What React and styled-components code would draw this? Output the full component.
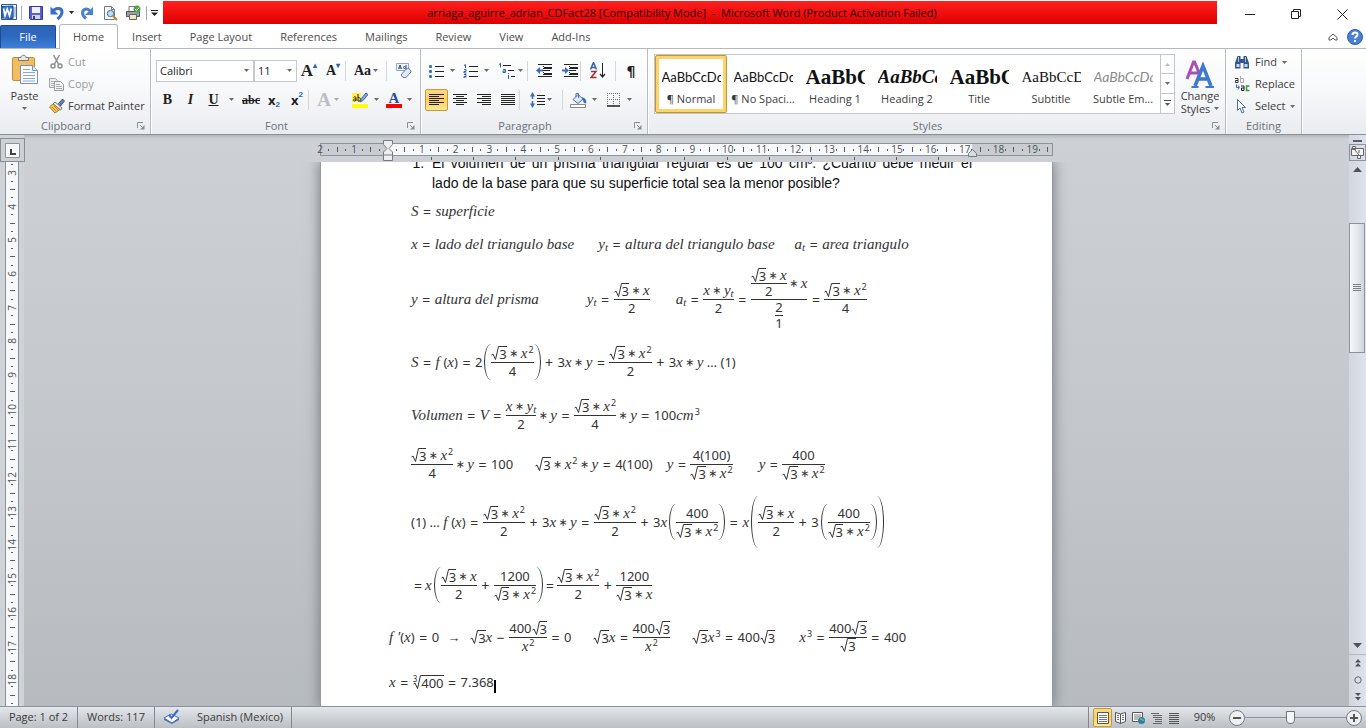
import React from "react";
import styled, { createGlobalStyle, css } from "styled-components";

const Global = createGlobalStyle`
  *, *::before, *::after { box-sizing: border-box; }
  html, body, #root { height: 100%; }
  body { margin: 0; overflow: hidden; font: 11px/16px "Open Sans", "Noto Sans", sans-serif; color: #3b3b3b; background: #fff; }
  button, select, input { font: inherit; color: inherit; }
  button { border: 0; padding: 0; background: none; }
  svg { display: block; flex: none; }
`;

/* ---------- window frame ---------- */
const Window = styled.div`
  display: grid;
  grid-template-rows: 25px 24px 86px minmax(0, 1fr) 22px;
  height: 100vh;
`;
const TitleBar = styled.header`
  display: flex;
  align-items: stretch;
`;
const QuickAccess = styled.div`
  display: flex;
  align-items: center;
  width: 163px;
  padding-left: 1px;
  gap: 3px;
  flex: none;
`;
const IconButton = styled.button`
  display: flex;
  align-items: center;
  justify-content: center;
  gap: ${(p) => p.$gap || 0}px;
  width: ${(p) => p.$w || 22}px;
  height: ${(p) => p.$h || 22}px;
  flex: none;
`;
const Separator = styled.span`
  width: 1px;
  height: ${(p) => p.$h || 14}px;
  background: ${(p) => p.$c || "#a9adb3"};
  flex: none;
`;
const Title = styled.h1`
  flex: 1;
  min-width: 0;
  margin: 1px 10px 1px 0;
  padding-right: 16px;
  font: 11px/24px "Open Sans", sans-serif;
  text-align: center;
  white-space: pre;
  overflow: hidden;
  color: #2a0000;
  background: linear-gradient(#ff2020, #f01010 50%, #d90000);
`;
const WindowButtons = styled.div`
  display: flex;
  width: 139px;
  flex: none;
`;
const WindowButton = styled.button`
  flex: 1;
  display: grid;
  place-items: center;
  padding-top: 3px;
`;

/* ---------- tabs ---------- */
const TabBar = styled.nav`
  display: flex;
  align-items: flex-end;
  border-bottom: 1px solid #b4b9bf;
`;
const FileTab = styled.button`
  width: 56px;
  height: 23px;
  margin-right: 3px;
  color: #fff;
  border: 1px solid #1c4b98;
  border-bottom: 0;
  border-radius: 2px 2px 0 0;
  background: linear-gradient(#2b62b4, #2f69c0 50%, #3f80da);
`;
const Tab = styled.button`
  height: 24px;
  padding: 0 13px;
  border: 1px solid transparent;
  border-bottom: 0;
  color: #4c4c4c;
  ${(p) =>
    p.$active &&
    css`
      margin-bottom: -1px;
      height: 25px;
      border-color: #b4b9bf;
      border-radius: 3px 3px 0 0;
      background: #fff;
    `}
`;
const TabTools = styled.div`
  display: flex;
  align-items: center;
  gap: 4px;
  height: 23px;
  margin-left: auto;
  padding-right: 3px;
`;

/* ---------- ribbon ---------- */
const Ribbon = styled.section`
  display: flex;
  background: linear-gradient(#fff, #f7f8fa 50%, #e9ecf0);
  border-bottom: 1px solid #8b9097;
`;
const Group = styled.section`
  display: flex;
  flex-direction: column;
  width: ${(p) => p.$w}px;
  flex: none;
  border-right: 1px solid #b9bdc3;
  box-shadow: 1px 0 0 #fff;
`;
const GroupBody = styled.div`
  display: flex;
  flex: 1;
  min-height: 0;
  padding: ${(p) => p.$p || "0"};
`;
const GroupLabel = styled.div`
  display: grid;
  grid-template-columns: ${(p) => (p.$plain ? "1fr" : "1fr 18px")};
  align-items: center;
  height: 16px;
  text-align: center;
  color: #6c7078;
`;
const LaunchButton = styled.button`
  display: grid;
  place-items: center;
  height: 16px;
`;
const Stack = styled.div`
  display: flex;
  flex-direction: column;
  padding-top: ${(p) => p.$pt || 0}px;
`;
const BigButton = styled.button`
  display: flex;
  flex-direction: column;
  align-items: center;
  gap: ${(p) => p.$gap || 0}px;
  width: ${(p) => p.$w}px;
  padding-top: 5px;
  line-height: 13px;
  flex: none;
`;
const TextButton = styled.button`
  display: flex;
  align-items: center;
  gap: ${(p) => p.$gap || 3}px;
  height: 22px;
  white-space: nowrap;
  color: ${(p) => (p.$off ? "#9b9b9b" : "#3b3b3b")};
`;
const ToolRow = styled.div`
  display: flex;
  align-items: center;
  height: 29px;
`;
const Combo = styled.label`
  display: flex;
  align-items: center;
  width: ${(p) => p.$w}px;
  height: 22px;
  padding-right: 4px;
  border: 1px solid #c4c8ce;
  background: #fff;
`;
const ComboSelect = styled.select`
  appearance: none;
  flex: 1;
  min-width: 0;
  border: 0;
  padding: 0 3px;
  background: none;
  color: #1e1e1e;
`;
const Letter = styled.span`
  font: ${(p) => p.$font || 'bold 14px/18px "Liberation Serif", serif'};
  color: ${(p) => p.$c || "#1e1e1e"};
  text-decoration: ${(p) => p.$deco || "none"};
`;
const Tiny = styled.sup`
  font: bold 8px/8px "Liberation Sans", sans-serif;
  color: #2f5fb3;
  align-self: ${(p) => (p.$low ? "flex-end" : "flex-start")};
  margin: 2px 0;
`;
const Underbar = styled.span`
  display: flex;
  flex-direction: column;
  align-items: center;
  width: 16px;
  border-bottom: 4px solid ${(p) => p.$c};
`;
const ToggleButton = styled(IconButton)`
  border: 1px solid #c29b3c;
  border-radius: 2px;
  background: linear-gradient(#fcd985, #fbcf5e 50%, #fdea8c);
`;
const CaretLine = styled.span`
  display: flex;
  align-items: center;
  gap: 4px;
`;

/* ---------- style gallery ---------- */
const Gallery = styled.div`
  display: flex;
  flex: none;
  width: 521px;
  height: 60px;
  border: 1px solid #c3c7cc;
  background: #fff;
`;
const StyleCard = styled.button`
  display: flex;
  flex-direction: column;
  align-items: center;
  width: 72px;
  flex: none;
  padding-top: 12px;
  ${(p) =>
    p.$active &&
    css`
      padding-top: 11px;
      border: 1px solid #c29436;
      border-radius: 2px;
      box-shadow: inset 0 0 0 3px #fbd56c;
    `}
`;
const Preview = styled.span`
  width: 59px;
  height: 24px;
  overflow: hidden;
  text-align: left;
  white-space: nowrap;
  font: ${(p) => p.$font};
  line-height: 20px;
  color: ${(p) => p.$c || "#111"};
`;
const GalleryScroll = styled.div`
  display: grid;
  grid-template-rows: repeat(3, 1fr);
  width: 14px;
  margin-left: auto;
`;
const GalleryButton = styled.button`
  display: grid;
  place-items: center;
  border-left: 1px solid #c3c7cc;
  border-bottom: 1px solid #c3c7cc;
  &:last-child { border-bottom: 0; }
`;

/* ---------- workspace ---------- */
const Workspace = styled.main`
  display: grid;
  grid-template-columns: 24px minmax(0, 1fr) 17px;
  min-height: 0;
  background: linear-gradient(#b4b8bd 0, #cdd0d5 4px, #c4c7cb 50%, #b7bbbf);
`;
const LeftRail = styled.div`
  display: flex;
  flex-direction: column;
  min-height: 0;
  padding-top: 3px;
  background: #cfd2d7;
`;
const TabStop = styled.button`
  display: grid;
  place-items: center;
  width: 25px;
  height: 24px;
  flex: none;
  border: 1px solid #8a8f97;
  background: #cdd0d5;
  z-index: 1;
`;
const VRuler = styled.ol`
  display: grid;
  grid-template-rows: repeat(65, minmax(0, 1fr));
  flex: 1;
  min-height: 0;
  width: 14px;
  margin: -3px 0 -3px 5px;
  padding: 0;
  list-style: none;
  border: 1px solid #8a93a0;
  background: #f7f8f9;
`;
const Mark = styled.li`
  display: grid;
  place-items: center;
  min-width: 0;
  min-height: 0;
  font: 10px/9px "Open Sans", sans-serif;
  color: #4f5358;
`;
const VNumber = styled.span`
  writing-mode: vertical-rl;
  transform: rotate(180deg);
  line-height: 12px;
`;
const Dash = styled.i`
  width: ${(p) => p.$w}px;
  height: ${(p) => p.$h}px;
  background: #5a5e63;
`;
const Center = styled.div`
  display: flex;
  flex-direction: column;
  align-items: center;
  min-width: 0;
  min-height: 0;
`;
const RulerArea = styled.div`
  width: 733px;
  height: 27px;
  flex: none;
  padding-top: 8px;
`;
const HRuler = styled.div`
  position: relative;
  height: 13px;
  border: 1px solid #8a93a0;
  background: linear-gradient(90deg, #c9ccd1 0 67px, #f7f8f9 67px 651px, #c9ccd1 651px);
`;
const HMarks = styled.ol`
  display: grid;
  grid-template-columns: repeat(87, minmax(0, 1fr));
  align-items: center;
  height: 11px;
  margin: 0 0 0 -5px;
  padding: 0;
  list-style: none;
`;
const Handle = styled.span`
  position: absolute;
  top: ${(p) => p.$top}px;
  left: ${(p) => p.$left}px;
`;
const TabTicks = styled.div`
  display: grid;
  grid-template-columns: repeat(13, 1fr);
  width: 550px;
  height: 5px;
  margin-left: 90px;
  padding-top: 1px;
  justify-items: center;
`;
const PageView = styled.div`
  display: flex;
  justify-content: center;
  align-self: stretch;
  flex: 1;
  min-height: 0;
  overflow: hidden;
`;
const Paper = styled.article`
  width: 733px;
  flex: none;
  overflow: hidden;
  background: #fff;
  border: solid #9599a0;
  border-width: 0 1px;
  box-shadow: 0 0 12px 1px #7d8085;
  color: #111;
`;
const Question = styled.ol`
  margin: -9px 0 1px;
  padding: 0 80px 0 107px;
  font: 14px/20px "Liberation Sans", Arial, sans-serif;
  li { padding-left: 4px; }
`;
const Justified = styled.span`
  display: block;
  text-align-last: justify;
`;

/* ---------- equations ---------- */
const Equation = styled.div`
  display: flex;
  align-items: center;
  height: ${(p) => p.$h}px;
  margin-left: ${(p) => (p.$outer ? 68 : 90)}px;
  font: 13px/17px "Noto Sans", sans-serif;
  color: #333;
  white-space: pre;
`;
const V = styled.i`
  font: italic 15px/17px "Liberation Serif", serif;
`;
const O = styled.span`
  width: ${(p) => p.$w || 17}px;
  text-align: center;
  font-size: 14px;
`;
const Star = styled.span`
  width: 14px;
  text-align: center;
  font: 11px/17px "DejaVu Sans", sans-serif;
`;
const Sup = styled.sup`
  font: 9px/9px "Noto Sans", sans-serif;
  margin: 0 0 8px 1px;
`;
const Sub = styled.sub`
  font: italic 11px/9px "Liberation Serif", serif;
  margin: 7px 0 0;
`;
const Gap = styled.span`
  width: ${(p) => p.$w}px;
`;
const FracBox = styled.span`
  display: inline-grid;
  grid-template-rows: 1fr 1px 1fr;
  justify-items: center;
`;
const Bar = styled.span`
  justify-self: stretch;
  height: 1px;
  background: #333;
`;
const Term = styled.span`
  display: flex;
  align-items: center;
  align-self: ${(p) => (p.$end ? "end" : "start")};
`;
const NestedBox = styled(FracBox)`
  line-height: 15px;
  & ${V}, & ${Star} { line-height: 15px; }
`;
const Root = styled.span`
  display: flex;
  align-items: stretch;
  height: 14px;
  line-height: 14px;
`;
const Radicand = styled.span`
  border-top: 1px solid #333;
`;
const Index = styled.sup`
  font: 8px/8px "Noto Sans", sans-serif;
  margin: 0 -4px 6px 0;
`;
const Paren = styled.span`
  width: 7px;
  height: ${(p) => p.$h || 36}px;
  border: 0 solid #333;
  ${(p) =>
    p.$right
      ? "border-right-width: 1px; border-radius: 0 100% 100% 0 / 0 50% 50% 0;"
      : "border-left-width: 1px; border-radius: 100% 0 0 100% / 50% 0 0 50%;"}
`;
const Caret = styled.span`
  width: 2px;
  height: 13px;
  margin-top: 8px;
  background: #000;
`;

/* ---------- vertical scroll bar ---------- */
const ScrollRail = styled.aside`
  display: flex;
  flex-direction: column;
  align-items: stretch;
  min-height: 0;
  padding-top: 3px;
  background: linear-gradient(90deg, #d3d8df, #dde2ec);
`;
const RailButton = styled.button`
  display: grid;
  place-items: center;
  height: ${(p) => p.$h}px;
  flex: none;
  border: ${(p) => (p.$box ? "1px solid #8a93a0" : "0")};
  ${(p) => p.$line && "border-top: 1px solid #b3b8c0;"}
`;
const Track = styled.div`
  flex: 1;
  min-height: 0;
  display: grid;
  grid-template-rows: 45fr 129fr 282fr;
`;
const Thumb = styled.div`
  grid-row: 2;
  display: grid;
  place-items: center;
  margin-right: 1px;
  border: 1px solid #8a93a0;
  background: linear-gradient(90deg, #f5f7fa, #e6e9ee 50%, #d0d5dd);
`;

/* ---------- status bar ---------- */
const StatusBar = styled.footer`
  display: flex;
  align-items: center;
  border-top: 1px solid #8a93a0;
  background: linear-gradient(#e3e6ea, #cfd3d7 50%, #bcc0c5);
`;
const StatusItem = styled.button`
  display: flex;
  align-items: center;
  justify-content: center;
  gap: 16px;
  height: 21px;
  padding-bottom: 1px;
  width: ${(p) => p.$w}px;
  border-right: 1px solid #85898f;
`;
const ViewTools = styled.div`
  display: flex;
  align-items: center;
  height: 21px;
  margin-left: auto;
  padding-left: 4px;
  border-left: 1px solid #85898f;
`;
const ZoomLabel = styled.button`
  width: 45px;
  height: 21px;
  padding: 0 4px 1px 0;
`;
const Slider = styled.input`
  appearance: none;
  width: 101px;
  height: 18px;
  margin: 0;
  background: linear-gradient(#8a93a0, #8a93a0) center / 100% 1px no-repeat;
  &::-webkit-slider-thumb {
    appearance: none;
    width: 9px;
    height: 13px;
    background: #f4f6f8;
    border: 1px solid #6d7480;
    border-radius: 1px 1px 5px 5px;
  }
`;

/* ---------- icons ---------- */
const Svg = ({ w = 16, h = 16, children }) => (
  <svg width={w} height={h} viewBox={`0 0 ${w} ${h}`} fill="none" aria-hidden="true">
    {children}
  </svg>
);
const Down = ({ c = "#6a6a6a" }) => (
  <Svg w={5} h={3}><path d="M0 0h5L2.500 3z" fill={c} /></Svg>
);
const Launcher = () => (
  <Svg w={8} h={8}>
    <path d="M.5 6V.5H6M3 3l3 3" stroke="#8a8e94" />
    <path d="M7.500 3v4.500H3z" fill="#8a8e94" />
  </Svg>
);
const Lines = ({ rows, w = 16, c = "#222" }) => (
  <Svg w={w} h={12}>
    {rows.map(([x, y, len], i) => <rect key={i} x={x} y={y} width={len} height="1" fill={c} />)}
  </Svg>
);
const WordLogo = () => (
  <Svg w={17} h={17}>
    <path d="M.5.5h15v15H.5z" fill="#fff" stroke="#2a5caa" />
    <path d="M12 4h3M12 6h3M12 8h3M12 10h3M12 12h3" stroke="#6f95cf" />
    <path d="M1 2.500 12 2v12.500L1 14z" fill="#3b78cc" stroke="#1b4687" />
    <path d="M2.500 4.500 4 11.500 6.200 5l2.300 6.500 1.800-7" stroke="#fff" strokeWidth="1.700" />
  </Svg>
);
const SaveIcon = () => (
  <Svg>
    <path d="M1.500 1.500h13v13h-12l-1-1z" fill="#5a60c4" stroke="#343a94" />
    <path d="M4 2h8v6H4z" fill="#eef1fb" /><path d="M4 10h8v4H4z" fill="#cdd3ea" /><path d="M5 11h2v3H5z" fill="#343a94" />
  </Svg>
);
const UndoIcon = () => (
  <Svg>
    <path d="M4 6.500C6 2.500 13 2.500 13 7c0 3-2 5-4.500 7" stroke="#3a6fc4" strokeWidth="3" />
    <path d="M1.500 1.500v8h8z" fill="#3a6fc4" />
  </Svg>
);
const RedoIcon = () => (
  <Svg>
    <path d="M11 6C8.500 2.500 3.500 4 3.500 8c0 2.500 1.500 4 3.500 5.500" stroke="#4a80d2" strokeWidth="3" />
    <path d="M14 2v8H6z" fill="#4a80d2" />
  </Svg>
);
const PreviewIcon = () => (
  <Svg>
    <path d="M2.500 1.500h7l3 3v10h-10z" fill="#fff" stroke="#6f7a8a" />
    <path d="M9.500 1.500v3h3" stroke="#6f7a8a" />
    <circle cx="8.500" cy="8.500" r="3.200" fill="#bcdcf5" stroke="#4f6a8c" />
    <path d="m11 11 4 4" stroke="#c58332" strokeWidth="2.200" />
  </Svg>
);
const PrintIcon = () => (
  <Svg>
    <path d="M4 1.500h6v5H4z" fill="#fff" stroke="#777" />
    <path d="M1.500 6.500h13v5h-13z" fill="#9aa0a8" stroke="#555" />
    <path d="M4.500 9.500h7v5h-7z" fill="#f4e6b6" stroke="#666" />
    <circle cx="12" cy="4" r="3.500" fill="#4da04a" /><path d="m10.200 4 1.500 1.500L14 2.500" stroke="#fff" />
  </Svg>
);
const PasteIcon = () => (
  <Svg w={28} h={30}>
    <rect x="1.500" y="3.500" width="22" height="23" rx="1.500" fill="#f0bd62" stroke="#c58e35" />
    <path d="M7.500 6.500v-3H10c0-3 5-3 5 0h2.500v3z" fill="#e4e6e9" stroke="#74787e" />
    <path d="M9.500 11.500h12l5 5v13h-17z" fill="#fbfcfe" stroke="#7c92b2" />
    <path d="M21.500 11.500v5h5" fill="#dfe7f2" stroke="#7c92b2" />
    <path d="M12 15.500h7M12 18.500h12M12 21.500h12M12 24.500h12M12 27h12" stroke="#8fa7cc" />
  </Svg>
);
const CutIcon = () => (
  <Svg>
    <path d="m4.500 1 5 9M10.500 1l-5 9" stroke="#8d8d8d" strokeWidth="1.500" />
    <circle cx="4" cy="12" r="2" stroke="#8d8d8d" strokeWidth="1.500" /><circle cx="11" cy="12" r="2" stroke="#8d8d8d" strokeWidth="1.500" />
  </Svg>
);
const CopyIcon = () => (
  <Svg>
    <path d="M.5 2.500h6l2 2v7h-8z" fill="#eee" stroke="#a5a5a5" /><path d="M2 5.500h4M2 7.500h4M2 9.500h3" stroke="#b5b5b5" />
    <path d="M5.500 5.500h6l3 3v6h-9z" fill="#f6f6f6" stroke="#999" /><path d="M7 8.500h4M7 10.500h6M7 12.500h6" stroke="#aaa" />
  </Svg>
);
const PainterIcon = () => (
  <Svg>
    <path d="m9.500 5.500 4-4.500 2 2-4 5z" fill="#6a7fb0" stroke="#44557e" />
    <path d="m6 4 7 6-1.500 2-7.500-6z" fill="#e8e8e8" stroke="#777" />
    <path d="M4 6 .5 9l5.500 6 5-3.500z" fill="#f3c653" stroke="#a27d28" /><path d="m3 9 4 4M5 8l4 4" stroke="#b98d2c" />
  </Svg>
);
const ClearIcon = () => (
  <Svg w={17} h={17}>
    <path d="M1.500 1.500h12v7h-12z" fill="#eef3fb" stroke="#8ea5cc" />
    <path d="m3.500 7 1.500-4 1.500 4M4 6h2M11 3v4M8.500 5.500a1 1 0 1 1 2 0 1 1 0 1 1-2 0" stroke="#34507f" />
    <path d="m6 13 5-6c2-1 5 0 5 3l-5 5.500H8z" fill="#dfe8f6" stroke="#5b78ab" />
  </Svg>
);
const HighlightIcon = () => (
  <Svg w={16} h={12}>
    <path d="M0 1h9v9H0z" fill="#fff04a" />
    <path d="M1.500 5.500C3 4 4 5 4 6v3M4 7c-3-.5-3.500 2-1.500 2L4 8M6 2v7c3 1 3.500-4 0-3.500" stroke="#222" />
    <path d="m8 10 1-3 5-6 2 1.500-5 6z" fill="#86a9de" stroke="#3b5f9c" />
  </Svg>
);
const BulletIcon = ({ numbers }) => (
  <Svg w={15} h={14}>
    {[2, 7, 12].map((y, i) => (
      <g key={y}>
        {numbers ? <path d={i ? `M1 ${y - 2}.500h2v2H1v1.500h2.500` : "M1 1.500 2.500.5v3.500"} stroke="#2f5fb3" /> : <rect x="0" y={y - 1} width="3" height="3" rx="1" fill="#3b6cc4" />}
        <path d={`M6 ${y}.500h9`} stroke="#222" />
      </g>
    ))}
  </Svg>
);
const MultiIcon = () => (
  <Svg w={20} h={16}>
    <path d="M1 1.500 2.500.5v4M5 6.500h2.500v3H5V8h2.500M10.500 10v1M10.500 12v4" stroke="#2f5fb3" />
    <path d="M5 2.500h8M10 7.500h6M13 13.500h4" stroke="#222" />
  </Svg>
);
const IndentIcon = ({ out }) => (
  <Svg w={16} h={14}>
    <path d="M2 .5h14M8 3.500h8M8 6.500h6M8 9.500h8M2 12.500h14" stroke="#222" />
    <path d="M8 4h8M8 10h8" stroke="#222" strokeWidth="2" />
    <path d="M7.500 0v14" stroke="#222" strokeDasharray="1 1" />
    <path d={out ? "M0 6.500 4 3v2.500h3v2H4V10z" : "M7 6.500 3 3v2.500H0v2h3V10z"} fill="#3b6cc4" />
  </Svg>
);
const SortIcon = () => (
  <Svg w={16} h={17}>
    <path d="M.5 7.500 3.500.5l3 7M1.500 5.500h4" stroke="#2f5fb3" strokeWidth="1.500" />
    <path d="M1 9.500h5l-5 6h5.500" stroke="#9c3131" strokeWidth="1.500" />
    <path d="M12.500 1v14" stroke="#222" /><path d="m10 12 2.500 3 2.500-3" stroke="#222" strokeWidth="1.200" />
  </Svg>
);
const SpacingIcon = () => (
  <Svg w={15} h={16}>
    <path d="M2.500 3v10" stroke="#3b6cc4" strokeWidth="1.500" strokeDasharray="4 2" /><path d="M0 4.500 2.500 0 5 4.500zM0 11.500 2.500 16 5 11.500z" fill="#3b6cc4" />
    <path d="M7 3.500h8M7 6.500h8M7 9.500h8M7 12.500h8" stroke="#222" />
  </Svg>
);
const ShadeIcon = () => (
  <Svg w={17} h={16}>
    <path d="m3 7.500 5-5 5 4.500-5 4.500z" fill="#dfe9f8" stroke="#4a6ca6" /><path d="M6 5V1.500h2.500V6" stroke="#4a6ca6" />
    <path d="M12 5c3 1 5 3 4 6.500-2.500-.5-3-2-4-6.500" fill="#3b6cc4" /><path d="M.5 12.500h15v3H.5z" fill="#fff" stroke="#888" />
  </Svg>
);
const BorderIcon = () => (
  <Svg w={14} h={14}>
    <path d="M.5 0v13M6.500 0v13M12.500 0v13M0 .5h13M0 6.500h13" stroke="#777" strokeDasharray="1 1" /><path d="M0 13h13" stroke="#222" strokeWidth="1.500" />
  </Svg>
);
const ChangeStylesIcon = () => (
  <Svg w={30} h={30}>
    <path d="M2 20 8.500 3h1L15 16M5 14h8" stroke="#a94fb8" strokeWidth="3" />
    <path d="m10 27 8-20 8 20M13 20h9" stroke="#3f78cf" strokeWidth="3.500" /><path d="M6.500 28h7M20.500 28H29" stroke="#3f78cf" strokeWidth="2" />
  </Svg>
);
const FindIcon = () => (
  <Svg>
    <path d="M3.500 2h3v3h3V2h3l2.500 7v5.500H9.500V9h-3v5.500H1V9z" fill="#34568c" />
    <path d="M2.500 10h3v3h-3zM10.500 10h3v3h-3z" fill="#c9dbf4" /><path d="M4.500 3v5M11.500 3v5" stroke="#a9c2e6" />
  </Svg>
);
const ReplaceIcon = () => (
  <Svg w={16} h={16}>
    <path d="M1 2.500h3v4H1.500v-2H4" stroke="#333" /><path d="M6.500 0v6.500h3v-4h-3" stroke="#aaa" />
    <path d="M2.500 8.500v3H5M4 9.500l1.500 2-1.500 2" stroke="#3b6cc4" />
    <path d="M7 10h3v4.500H7.500v-2.500H10" stroke="#222" /><path d="M15.500 10H12.500v4.500h3" stroke="#2f9a3c" strokeWidth="1.500" />
  </Svg>
);
const SelectIcon = () => (
  <Svg><path d="M3.500 1.500v11l2.500-2.500 2 5 2-1-2-4.500h3.500z" fill="#f5f8fd" stroke="#4d6fa8" /></Svg>
);
const ProofIcon = () => (
  <Svg w={18} h={16}>
    <path d="m1 9 7-4 8 4-7 5z" fill="#f8fafd" stroke="#4a6ca6" /><path d="M1 9v2l8 4 7-4V9l-7 5z" fill="#4a73bd" />
    <path d="m6 6 2.500 3L15 1" stroke="#3b6cc4" strokeWidth="2" />
  </Svg>
);
const ReadIcon = () => (
  <Svg w={14} h={14}><path d="M1.500 1.500 6.500 3l5-1.500v9l-5 2-5-2zM6.500 3v9.500" fill="#f7f7f7" stroke="#555" /><path d="M3 4.500h2M3 6.500h2M3 8.500h2M8 4.500h2M8 6.500h2M8 8.500h2" stroke="#777" /></Svg>
);
const WebIcon = () => (
  <Svg w={14} h={14}><path d="M.5 1.500h10v9H.5z" fill="#fff" stroke="#555" /><path d="M2 4h7M2 6h7M2 8h4" stroke="#777" /><circle cx="9.500" cy="9.500" r="3.500" fill="#2e7cae" /><path d="M8 8c2-1 2 2 4 1" stroke="#6cbf5a" strokeWidth="1.500" /></Svg>
);
const PageIcon = () => (
  <Svg w={12} h={12}><path d="M.5.5h11v11H.5z" fill="#fff" stroke="#555" /><path d="M2 3.500h8M2 5.500h8M2 7.500h8M2 9.500h8" stroke="#777" /></Svg>
);
const Round = ({ plus }) => (
  <Svg><circle cx="8" cy="8" r="7.500" fill="#eef0f3" stroke="#777c84" /><path d={plus ? "M4 8h8M8 4v8" : "M4 8h8"} stroke="#555" strokeWidth="2" /></Svg>
);
const Jump = ({ down }) => (
  <Svg w={6} h={8}><path d={down ? "M0 0h6L3 3zM0 4h6L3 7.500z" : "M0 3.500h6L3 0zM0 7.500h6L3 4z"} fill="#4f5358" /></Svg>
);

/* ---------- equation pieces ---------- */
const Sqrt = ({ children, index }) => (
  <>
    {index && <Index>{index}</Index>}
    <Root>
      <Svg w={8} h={14}><path d="M.5 9 2 8l2.500 5.500L7.500.5H8" stroke="#333" /></Svg>
      <Radicand>{children}</Radicand>
    </Root>
  </>
);
const Frac = ({ top, bottom, as: Box = FracBox }) => (
  <Box>
    <Term $end>{top}</Term>
    <Bar />
    <Term>{bottom}</Term>
  </Box>
);
const NestedFrac = (props) => <Frac as={NestedBox} {...props} />;
const Eq = ({ w }) => <O $w={w}>=</O>;
const Plus = ({ w }) => <O $w={w}>+</O>;
const Times = () => <Star>∗</Star>;
const X = () => <V>x</V>;
const Y = () => <V>y</V>;
const X2 = () => <><V>x</V><Sup>2</Sup></>;
const Yt = () => <><V>y</V><Sub>t</Sub></>;
const At = () => <><V>a</V><Sub>t</Sub></>;
const R3 = () => <Sqrt>3</Sqrt>;
const R3x = () => <><R3 /><Times /><X /></>;
const R3x2 = () => <><R3 /><Times /><X2 /></>;
const Fx = () => <><V>f </V>(<X />)</>;

/* ---------- data ---------- */
const calibri = '13px "Lato", sans-serif';
const styleCards = [
  ["¶ Normal", "AaBbCcDdEe", calibri],
  ["¶ No Spaci...", "AaBbCcDdEe", calibri],
  ["Heading 1", "AaBbCc", 'bold 21px "Liberation Serif", serif'],
  ["Heading 2", "AaBbCc", 'italic bold 19px "Liberation Serif", serif'],
  ["Title", "AaBbCc", 'bold 21px "Liberation Serif", serif'],
  ["Subtitle", "AaBbCcDd", '15px "Liberation Serif", serif'],
  ["Subtle Em...", "AaBbCcDdEe", 'italic 14px "Lato", sans-serif', "#8a8a8a"],
];
const tabs = ["Home", "Insert", "Page Layout", "References", "Mailings", "Review", "View", "Add-Ins"];
const hMarks = Array.from({ length: 87 }, (_, i) => i - 8);
const vMarks = Array.from({ length: 65 }, (_, i) => i + 11);
const LEFT = [[0, 0, 15], [0, 2, 10], [0, 4, 15], [0, 6, 10], [0, 8, 15], [0, 10, 10]];
const MID = [[0, 0, 14], [3, 2, 8], [0, 4, 14], [3, 6, 8], [0, 8, 14], [3, 10, 8]];
const RIGHT = [[0, 0, 14], [5, 2, 9], [0, 4, 14], [5, 6, 9], [0, 8, 14], [5, 10, 9]];
const FULL = [0, 2, 4, 6, 8, 10].map((y) => [0, y, 14]);

const HMark = ({ q }) => {
  if (q === 0) return <Mark />;
  if (q % 4 === 0) return <Mark>{Math.abs(q / 4)}</Mark>;
  return <Mark><Dash $w={1} $h={q % 2 === 0 ? 5 : 2} /></Mark>;
};
const VMark = ({ q }) => {
  if (q % 4 === 0) return <Mark><VNumber>{q / 4}</VNumber></Mark>;
  return <Mark><Dash $w={q % 2 === 0 ? 5 : 2} $h={1} /></Mark>;
};
const Footer = ({ children, plain }) => (
  <GroupLabel $plain={plain}>
    <span>{children}</span>
    {!plain && <LaunchButton aria-label={`${children} settings`}><Launcher /></LaunchButton>}
  </GroupLabel>
);
const Rule = () => <Separator $h={20} $c="#d3d6db" />;

export default function App() {
  return (
    <>
      <Global />
      <Window>
        <TitleBar>
          <QuickAccess>
            <WordLogo /><Separator />
            <IconButton aria-label="Save" $w={21}><SaveIcon /></IconButton>
            <IconButton aria-label="Undo" $w={25} $gap={4}><UndoIcon /><Down c="#222" /></IconButton>
            <IconButton aria-label="Redo" $w={20}><RedoIcon /></IconButton>
            <IconButton aria-label="Print Preview" $w={20}><PreviewIcon /></IconButton>
            <IconButton aria-label="Quick Print" $w={20}><PrintIcon /></IconButton>
            <Separator />
            <IconButton aria-label="Customize" $w={8}><Svg w={7} h={6}><path d="M0 .5h7" stroke="#222" /><path d="M0 2.500h7L3.500 6z" fill="#222" /></Svg></IconButton>
          </QuickAccess>
          <Title>{"arriaga_aguirre_adrian_CDFact28 [Compatibility Mode]  -  Microsoft Word (Product Activation Failed)"}</Title>
          <WindowButtons>
            <WindowButton aria-label="Minimize"><Svg w={10} h={10}><path d="M0 5.500h10" stroke="#222" /></Svg></WindowButton>
            <WindowButton aria-label="Restore"><Svg w={10} h={10}><path d="M.5 2.500h7v7h-7zM2.500 2.500v-2h7v7h-2" stroke="#222" /></Svg></WindowButton>
            <WindowButton aria-label="Close"><Svg w={11} h={11}><path d="m.5.5 10 10M10.500.5l-10 10" stroke="#222" /></Svg></WindowButton>
          </WindowButtons>
        </TitleBar>

        <TabBar>
          <FileTab>File</FileTab>
          {tabs.map((t, i) => <Tab key={t} $active={i === 0}>{t}</Tab>)}
          <TabTools>
            <IconButton aria-label="Minimize the Ribbon" $w={20}><Svg w={10} h={8}><path d="m1 4.500 4-3.500 4 3.500v2.500H7L5 5 3 7H1z" stroke="#555" /></Svg></IconButton>
            <IconButton aria-label="Help" $w={16}><Svg><circle cx="8" cy="8" r="7.500" fill="#4a80d2" stroke="#2c5ca8" /><path d="M5.500 6c0-3.500 5-3 5-.5 0 2-2.500 2-2.500 4M8 11v2" stroke="#fff" strokeWidth="2" /></Svg></IconButton>
          </TabTools>
        </TabBar>

        <Ribbon>
          <Group $w={151}>
            <GroupBody>
              <BigButton $w={49} $gap={5}><PasteIcon />Paste<Down /></BigButton>
              <Stack $pt={2}>
                <TextButton $off><CutIcon />Cut</TextButton>
                <TextButton $off><CopyIcon />Copy</TextButton>
                <TextButton><PainterIcon />Format Painter</TextButton>
              </Stack>
            </GroupBody>
            <Footer>Clipboard</Footer>
          </Group>

          <Group $w={270}>
            <GroupBody $p="7px 0 0 5px">
              <Stack>
                <ToolRow>
                  <Combo $w={98}><ComboSelect aria-label="Font"><option>Calibri</option></ComboSelect><Down /></Combo>
                  <Combo $w={43}><ComboSelect aria-label="Font size"><option>11</option></ComboSelect><Down /></Combo>
                  <IconButton aria-label="Grow Font" $w={24}><Letter $font='bold 17px/20px "Liberation Serif", serif'>A</Letter><Tiny>▴</Tiny></IconButton>
                  <IconButton aria-label="Shrink Font" $w={24}><Letter>A</Letter><Tiny>▾</Tiny></IconButton>
                  <Rule />
                  <IconButton aria-label="Change Case" $w={40} $gap={2}><Letter>Aa</Letter><Down /></IconButton>
                  <Rule />
                  <IconButton aria-label="Clear Formatting" $w={32}><ClearIcon /></IconButton>
                </ToolRow>
                <ToolRow>
                  <IconButton aria-label="Bold" $w={23}><Letter>B</Letter></IconButton>
                  <IconButton aria-label="Italic" $w={23}><Letter $font='italic bold 14px/18px "Liberation Serif", serif'>I</Letter></IconButton>
                  <IconButton aria-label="Underline" $w={38} $gap={10}><Letter $deco="underline">U</Letter><Down /></IconButton>
                  <IconButton aria-label="Strikethrough" $w={22}><Letter $font='bold 12px/18px "Liberation Serif", serif' $deco="line-through">abc</Letter></IconButton>
                  <IconButton aria-label="Subscript" $w={24}><Letter $font='bold 13px/18px "Open Sans", sans-serif'>x</Letter><Tiny $low>2</Tiny></IconButton>
                  <IconButton aria-label="Superscript" $w={22}><Letter $font='bold 13px/18px "Open Sans", sans-serif'>x</Letter><Tiny>2</Tiny></IconButton>
                  <Rule />
                  <IconButton aria-label="Text Effects" $w={38} $gap={3}><Letter $c="#bdbdc4" $font='bold 19px/20px "Liberation Serif", serif'>A</Letter><Down c="#aaa" /></IconButton>
                  <IconButton aria-label="Highlight" $w={36} $gap={6}><Underbar $c="#ffff00"><HighlightIcon /></Underbar><Down /></IconButton>
                  <IconButton aria-label="Font Color" $w={32} $gap={5}><Underbar $c="#ff0000"><Letter $c="#2a4f94" $font='bold 15px/12px "Liberation Serif", serif'>A</Letter></Underbar><Down /></IconButton>
                </ToolRow>
              </Stack>
            </GroupBody>
            <Footer>Font</Footer>
          </Group>

          <Group $w={227}>
            <GroupBody $p="7px 0 0 4px">
              <Stack>
                <ToolRow>
                  <IconButton aria-label="Bullets" $w={34} $gap={6}><BulletIcon /><Down /></IconButton>
                  <IconButton aria-label="Numbering" $w={34} $gap={6}><BulletIcon numbers /><Down /></IconButton>
                  <IconButton aria-label="Multilevel List" $w={34}><MultiIcon /><Down /></IconButton>
                  <Rule />
                  <IconButton aria-label="Decrease Indent" $w={32}><IndentIcon out /></IconButton>
                  <IconButton aria-label="Increase Indent" $w={20}><IndentIcon /></IconButton>
                  <Rule />
                  <IconButton aria-label="Sort" $w={34}><SortIcon /></IconButton>
                  <Rule />
                  <IconButton aria-label="Show Marks" $w={30}><Letter $font='bold 14px/18px "DejaVu Sans", sans-serif'>¶</Letter></IconButton>
                </ToolRow>
                <ToolRow>
                  <ToggleButton aria-label="Align Left" $w={23}><Lines rows={LEFT} /></ToggleButton>
                  <IconButton aria-label="Center" $w={24}><Lines rows={MID} w={14} /></IconButton>
                  <IconButton aria-label="Align Right" $w={24}><Lines rows={RIGHT} w={14} /></IconButton>
                  <IconButton aria-label="Justify" $w={23}><Lines rows={FULL} w={14} /></IconButton>
                  <Rule />
                  <IconButton aria-label="Line Spacing" $w={42} $gap={2}><SpacingIcon /><Down /></IconButton>
                  <Rule />
                  <IconButton aria-label="Shading" $w={40} $gap={5}><ShadeIcon /><Down /></IconButton>
                  <IconButton aria-label="Borders" $w={32} $gap={6}><BorderIcon /><Down /></IconButton>
                </ToolRow>
              </Stack>
            </GroupBody>
            <Footer>Paragraph</Footer>
          </Group>

          <Group $w={578}>
            <GroupBody $p="5px 0 0 6px">
              <Gallery>
                {styleCards.map(([name, sample, font, c], i) => (
                  <StyleCard key={name} $active={i === 0}><Preview $font={font} $c={c}>{sample}</Preview>{name}</StyleCard>
                ))}
                <GalleryScroll>
                  <GalleryButton aria-label="Row up"><Svg w={5} h={3}><path d="M0 3h5L2.500 0z" fill="#b5b8bd" /></Svg></GalleryButton>
                  <GalleryButton aria-label="Row down"><Down /></GalleryButton>
                  <GalleryButton aria-label="More styles"><Svg w={7} h={6}><path d="M0 .5h7" stroke="#555" /><path d="M1 3h5L3.500 6z" fill="#555" /></Svg></GalleryButton>
                </GalleryScroll>
              </Gallery>
              <BigButton $w={50}><ChangeStylesIcon />Change<CaretLine>Styles <Down /></CaretLine></BigButton>
            </GroupBody>
            <Footer>Styles</Footer>
          </Group>

          <Group $w={76}>
            <GroupBody $p="2px 0 0 8px">
              <Stack>
                <TextButton $gap={5}><FindIcon />Find <Down /></TextButton>
                <TextButton $gap={5}><ReplaceIcon />Replace</TextButton>
                <TextButton $gap={5}><SelectIcon />Select <Down /></TextButton>
              </Stack>
            </GroupBody>
            <Footer plain>Editing</Footer>
          </Group>
        </Ribbon>

        <Workspace>
          <LeftRail>
            <TabStop aria-label="Tab selector"><Svg w={15} h={15}><path d="M.5.5h14v14H.5z" fill="#f7f8f9" stroke="#8a93a0" /><path d="M6 6v5h5" stroke="#444" strokeWidth="2" /></Svg></TabStop>
            <VRuler>{vMarks.map((q) => <VMark key={q} q={q} />)}</VRuler>
          </LeftRail>
          <Center>
            <RulerArea>
              <HRuler>
                <HMarks>{hMarks.map((q) => <HMark key={q} q={q} />)}</HMarks>
                <Handle $top={-4} $left={62}><Svg w={10} h={21}><path d="M.5.5h9v4L6 8.500 9.500 12v8.500h-9V12L4 8.500.5 4.500zM.5 15h9" fill="#eceef0" stroke="#777c84" /></Svg></Handle>
                <Handle $top={5} $left={647}><Svg w={9} h={8}><path d="M.5 7.500v-3l4-4 4 4v3z" fill="#d9dbde" stroke="#777c84" /></Svg></Handle>
              </HRuler>
              <TabTicks>{Array.from({ length: 13 }, (_, i) => <Dash key={i} $w={1} $h={3} />)}</TabTicks>
            </RulerArea>
            <PageView>
              <Paper>
                <Question>
                  <li><Justified>El volumen de un prisma triangular regular es de 100 cm³. ¿Cuánto debe medir el</Justified>
                  lado de la base para que su superficie total sea la menor posible?</li>
                </Question>

                <Equation $h={34}><V>S</V><Eq /><V>superficie</V></Equation>
                <Equation $h={32}>
                  <X /><Eq /><V>lado del triangulo base</V><Gap $w={24} />
                  <Yt /><Eq /><V>altura del triangulo base</V><Gap $w={20} />
                  <At /><Eq /><V>area triangulo</V>
                </Equation>
                <Equation $h={78}>
                  <Y /><Eq /><V>altura del prisma</V><Gap $w={48} />
                  <Yt /><Eq /><Frac top={<R3x />} bottom="2" /><Gap $w={26} />
                  <At /><Eq /><Frac top={<><X /><Times /><Yt /></>} bottom="2" /><Eq />
                  <Frac top={<><NestedFrac top={<R3x />} bottom="2" /><Times /><X /></>} bottom={<NestedFrac top="2" bottom="1" />} /><Eq />
                  <Frac top={<R3x2 />} bottom="4" />
                </Equation>
                <Equation $h={48}>
                  <V>S</V><Eq /><Fx /><Eq />2<Gap $w={2} /><Paren /><Frac top={<R3x2 />} bottom="4" /><Paren $right />
                  <Plus />3<X /><Times /><Y /><Eq /><Frac top={<R3x2 />} bottom="2" /><Plus />3<X /><Times /><Y /> … (1)
                </Equation>
                <Equation $h={58}>
                  <V>Volumen</V><Eq /><V>V</V><Eq /><Frac top={<><X /><Times /><Yt /></>} bottom="2" /><Times /><Y /><Eq />
                  <Frac top={<R3x2 />} bottom="4" /><Times /><Y /><Eq />100<V>cm</V><Sup>3</Sup>
                </Equation>
                <Equation $h={40}>
                  <Frac top={<R3x2 />} bottom="4" /><Times /><Y /><Eq />100<Gap $w={22} />
                  <R3x2 /><Times /><Y /><Eq />4(100)<Gap $w={14} />
                  <Y /><Eq /><Frac top="4(100)" bottom={<R3x2 />} /><Gap $w={26} />
                  <Y /><Eq /><Frac top="400" bottom={<R3x2 />} />
                </Equation>
                <Equation $h={76}>
                  (1) … <Fx /><Eq /><Frac top={<R3x2 />} bottom="2" /><Plus />3<X /><Times /><Y /><Eq /><Frac top={<R3x2 />} bottom="2" /><Plus />3<X />
                  <Gap $w={2} /><Paren /><Frac top="400" bottom={<R3x2 />} /><Paren $right /><Eq /><X /><Gap $w={2} />
                  <Paren $h={52} /><Frac top={<R3x />} bottom="2" /><Plus />3<Gap $w={2} /><Paren /><Frac top="400" bottom={<R3x2 />} /><Paren $right /><Paren $h={52} $right />
                </Equation>
                <Equation $h={50}>
                  <Eq w={14} /><X /><Gap $w={2} /><Paren /><Frac top={<R3x />} bottom="2" /><Plus /><Frac top="1200" bottom={<R3x2 />} /><Paren $right /><Eq w={14} />
                  <Frac top={<R3x2 />} bottom="2" /><Plus /><Frac top="1200" bottom={<R3x />} />
                </Equation>
                <Equation $h={54} $outer>
                  <V>f ′</V>(<X />)<Eq />0<Gap $w={8} />→<Gap $w={10} /><R3 /><X /><O>−</O><Frac top={<>400<R3 /></>} bottom={<X2 />} /><Eq />0<Gap $w={22} />
                  <R3 /><X /><Eq /><Frac top={<>400<R3 /></>} bottom={<X2 />} /><Gap $w={22} />
                  <R3 /><X /><Sup>3</Sup><Eq />400<R3 /><Gap $w={24} />
                  <X /><Sup>3</Sup><Eq /><Frac top={<>400<R3 /></>} bottom={<R3 />} /><Eq />400
                </Equation>
                <Equation $h={36} $outer><X /><Eq /><Sqrt index="3">400</Sqrt><Eq />7.368<Caret /></Equation>
              </Paper>
            </PageView>
          </Center>
          <ScrollRail>
            <RailButton aria-label="Split" $h={6}><Dash $w={9} $h={2} /></RailButton>
            <RailButton aria-label="View Ruler" $h={17} $box><Svg w={13} h={13}><path d="M.5 2.500h12v7H.5zM1.500.5h3v3h-3zM6.500 9.500h3v3h-3zM4 4l4 5M8 4v3" fill="#f1f3f5" stroke="#666" /></Svg></RailButton>
            <RailButton aria-label="Scroll up" $h={17}><Svg w={9} h={5}><path d="M0 5h9L4.500 0z" fill="#4f5358" /></Svg></RailButton>
            <Track><Thumb><Svg w={8} h={8}><path d="M0 .5h8M0 2.500h8M0 4.500h8M0 6.500h8" stroke="#7c828b" /></Svg></Thumb></Track>
            <RailButton aria-label="Scroll down" $h={17}><Svg w={9} h={5}><path d="M0 0h9L4.500 5z" fill="#4f5358" /></Svg></RailButton>
            <RailButton aria-label="Previous page" $h={17} $line><Jump /></RailButton>
            <RailButton aria-label="Browse object" $h={17}><Svg w={8} h={8}><circle cx="4" cy="4" r="3.200" stroke="#666" /></Svg></RailButton>
            <RailButton aria-label="Next page" $h={18}><Jump down /></RailButton>
          </ScrollRail>
        </Workspace>

        <StatusBar>
          <StatusItem $w={78}>Page: 1 of 2</StatusItem>
          <StatusItem $w={77}>Words: 117</StatusItem>
          <StatusItem $w={137}><ProofIcon />Spanish (Mexico)</StatusItem>
          <ViewTools>
            <ToggleButton aria-label="Print Layout" $w={19} $h={19}><PageIcon /></ToggleButton>
            <IconButton aria-label="Full Screen Reading" $w={18}><ReadIcon /></IconButton>
            <IconButton aria-label="Web Layout" $w={18}><WebIcon /></IconButton>
            <IconButton aria-label="Outline" $w={18}><Lines w={12} c="#666" rows={[[0, 1, 8], [2, 3, 9], [2, 5, 9], [4, 7, 7], [4, 9, 7], [2, 11, 9]]} /></IconButton>
            <IconButton aria-label="Draft" $w={18}><Lines w={12} c="#555" rows={[[0, 1, 10], [0, 3, 10], [0, 5, 10], [0, 7, 10], [0, 9, 10], [0, 11, 10]]} /></IconButton>
            <ZoomLabel>90%</ZoomLabel>
            <IconButton aria-label="Zoom out" $w={16}><Round /></IconButton>
            <Slider type="range" aria-label="Zoom" min="0" max="100" defaultValue="45" />
            <IconButton aria-label="Zoom in" $w={16}><Round plus /></IconButton>
            <Gap $w={4} />
          </ViewTools>
        </StatusBar>
      </Window>
    </>
  );
}
